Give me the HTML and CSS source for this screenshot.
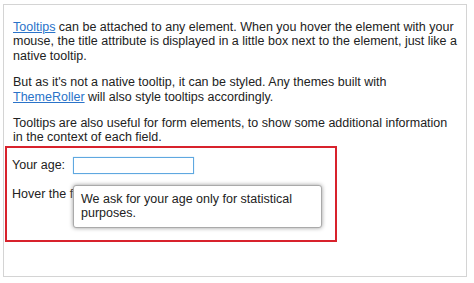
FILE: index.html
```html
<!DOCTYPE html>
<html>
<head>
<meta charset="utf-8">
<link rel="stylesheet" href="styles.css">
</head>
<body>
<div class="frame">
  <p class="para"><a href="#">Tooltips</a> can be attached to any element. When you hover the element with your mouse, the title attribute is displayed in a little box next to the element, just like a native tooltip.</p>
  <p class="para">But as it's not a native tooltip, it can be styled. Any themes built with <a href="#">ThemeRoller</a> will also style tooltips accordingly.</p>
  <p class="para last">Tooltips are also useful for form elements, to show some additional information in the context of each field.</p>
  <div class="form">
    <div class="row">
      <label class="label">Your age:</label>
      <input class="input" type="text">
    </div>
    <p class="hint">Hover the field to see the tooltip.</p>
    <div class="tooltip">We ask for your age only for statistical purposes.</div>
  </div>
</div>
</body>
</html>
```
FILE: styles.css
```css
html, body {
  margin: 0;
  padding: 0;
  background: #fff;
}
body {
  font-family: "Liberation Sans", Arial, sans-serif;
  font-size: 12.5px;
  line-height: 14.4px;
  color: #222;
}
.frame {
  margin: 4px 0 0 3px;
  width: 461px;
  border: 1px solid #d4d4d4;
  padding: 15px 0 0 1px;
  height: 256px;
}
.para {
  margin: 0 0 12px 0;
  padding: 0 8px;
}
.para.last {
  margin-bottom: 0;
}
a {
  color: #2a73c9;
  text-decoration: underline;
}
.form {
  position: relative;
  width: 323px;
  border: 2px solid #d8222c;
  padding: 9px 0 0 5px;
  height: 83px;
  margin-top: 1px;
}
.row {
  display: flex;
  align-items: center;
  gap: 8px;
}
.input {
  -webkit-appearance: none;
  appearance: none;
  display: block;
  width: 121px;
  height: 17px;
  box-sizing: border-box;
  border: 1px solid #5fa8e0;
  border-radius: 0;
  box-shadow: 0 0 1px #9fd0f2;
  outline: none;
  margin: 0;
  padding: 0 3px;
  font: inherit;
  background: #fff;
}
.hint {
  margin: 13px 0 0 0;
}
.tooltip {
  position: absolute;
  left: 66px;
  top: 37px;
  width: 249px;
  height: 43px;
  box-sizing: border-box;
  border: 1px solid #aaa;
  border-radius: 3px;
  background: #fff;
  box-shadow: 0 0 4px #999;
  padding: 6px 7px;
  line-height: 14px;
}
```
